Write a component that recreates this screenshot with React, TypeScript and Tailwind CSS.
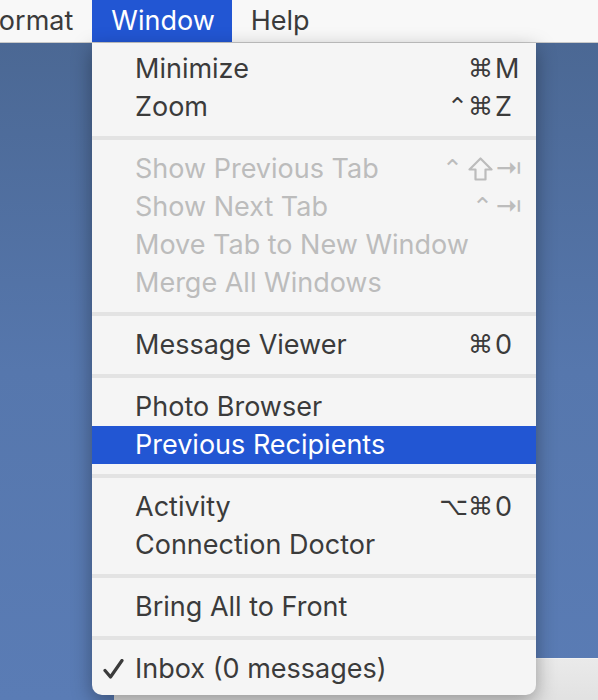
import React from "react";

type Item =
  | { sep: true }
  | {
      sep?: false;
      label: string;
      mods?: string;
      shift?: boolean;
      keyChar?: string;
      disabled?: boolean;
      active?: boolean;
      checked?: boolean;
    };

const items: Item[] = [
  { label: "Minimize", mods: "⌘", keyChar: "M" },
  { label: "Zoom", mods: "⌃⌘", keyChar: "Z" },
  { sep: true },
  { label: "Show Previous Tab", mods: "⌃", shift: true, keyChar: "⇥", disabled: true },
  { label: "Show Next Tab", mods: "⌃", keyChar: "⇥", disabled: true },
  { label: "Move Tab to New Window", disabled: true },
  { label: "Merge All Windows", disabled: true },
  { sep: true },
  { label: "Message Viewer", mods: "⌘", keyChar: "0" },
  { sep: true },
  { label: "Photo Browser" },
  { label: "Previous Recipients", active: true },
  { sep: true },
  { label: "Activity", mods: "⌥⌘", keyChar: "0" },
  { label: "Connection Doctor" },
  { sep: true },
  { label: "Bring All to Front" },
  { sep: true },
  { label: "Inbox (0 messages)", checked: true },
];

function Check() {
  return (
    <svg width="21" height="20" viewBox="0 0 21 20" className="absolute left-[11px]">
      <path
        d="M2 11.5 L7.5 18 L19 1.5"
        fill="none"
        stroke="currentColor"
        strokeWidth="3.2"
        strokeLinecap="round"
        strokeLinejoin="round"
      />
    </svg>
  );
}

function ShiftGlyph() {
  return (
    <svg width="25" height="24" viewBox="0 0 25 24" className="ml-[3px] mr-[2px]">
      <path
        d="M12.5 1.5 L23.5 12.5 L17.5 12.5 L17.5 22.5 L7.5 22.5 L7.5 12.5 L1.5 12.5 Z"
        fill="none"
        stroke="currentColor"
        strokeWidth="2.2"
        strokeLinejoin="round"
      />
    </svg>
  );
}

function MenuRow({ item }: { item: Exclude<Item, { sep: true }> }) {
  const color = item.active
    ? "bg-[#2256d3] text-white"
    : item.disabled
    ? "text-[#bcbcbc]"
    : "text-[#3b3b3b]";
  return (
    <div className={`relative flex h-[38px] items-center pl-[43px] pr-[10px] ${color}`}>
      {item.checked && <Check />}
      <span className="flex-1">{item.label}</span>
      {item.keyChar && (
        <div className="flex items-center">
          <span className="pr-[2px] text-right font-['DejaVu_Sans',sans-serif] text-[25px]">
            {item.mods}
          </span>
          {item.shift && <ShiftGlyph />}
          <span className="w-[31px]">{item.keyChar}</span>
        </div>
      )}
    </div>
  );
}

export default function App() {
  return (
    <div className="relative h-[700px] w-[598px] overflow-hidden bg-[#5777ad] font-['Inter',sans-serif] text-[27px]">
      <div className="relative z-10 flex h-[43px] items-center border-b border-[#c9c9c9] bg-[#f8f8f8] text-[#3b3b3b]">
        <span className="-ml-[16px] pr-[19px]">Format</span>
        <span className="flex h-full items-center bg-[#2256d3] pl-[19px] pr-[17px] text-white">Window</span>
        <span className="pl-[19px]">Help</span>
      </div>

      <div className="absolute inset-x-0 top-[43px] bottom-0 bg-gradient-to-b from-[#4b6894] via-[#5677ad] to-[#5a7cb5]" />

      <div className="absolute left-[114px] top-[658px] h-[60px] w-[500px] border-t border-[#f2f2f2] bg-gradient-to-b from-[#eaeaea] to-[#dedede]" />

      <div className="absolute left-[92px] top-[43px] z-20 w-[444px] rounded-b-[10px] bg-[#f5f5f5] py-[7px] shadow-[0_6px_20px_rgba(0,0,0,0.35)]">
        {items.map((item, i) =>
          item.sep ? (
            <div key={i} className="py-[10px]">
              <div className="h-[4px] bg-[#e3e3e3]" />
            </div>
          ) : (
            <MenuRow key={i} item={item} />
          )
        )}
      </div>
    </div>
  );
}
